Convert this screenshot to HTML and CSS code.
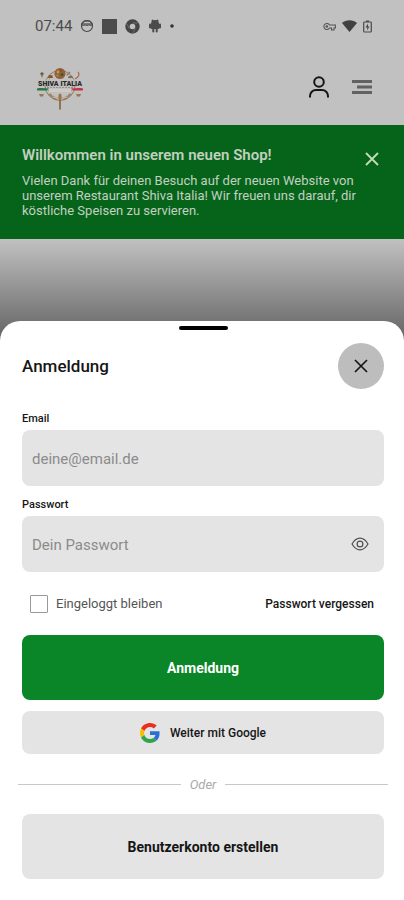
FILE: index.html
```html
<!DOCTYPE html>
<html lang="de">
<head>
<meta charset="utf-8">
<meta name="viewport" content="width=device-width, initial-scale=1">
<title>Shiva Italia – Anmeldung</title>
<link rel="stylesheet" href="styles.css">
</head>
<body>
<div class="status">
  <div class="status-group">
    <span class="time">07:44</span>
    <svg width="14" height="14" viewBox="0 0 14 14" fill="none" stroke="#4b4b4b"><circle cx="7" cy="7" r="5.500" stroke-width="1.200"/><path d="M1.500 5.500C3 7.500 5 5 7 6.500c2-1.500 4 1 5.500-1C12 2.500 9.500 1.500 7 1.500S2 2.500 1.500 5.500z" fill="#4b4b4b" fill-opacity=".6"/><path d="M4 3.500h6" stroke="#c1c1c1"/></svg>
    <svg width="15" height="15" viewBox="0 0 15 15"><path fill="#4b4b4b" d="M0 0h15v15H0z"/></svg>
    <svg width="15" height="15" viewBox="0 0 15 15"><circle cx="7.500" cy="7.500" r="5" fill="none" stroke="#454545" stroke-width="4.400"/><path d="M6.200 5.200l3.600 2.300-3.600 2.300z" fill="#c1c1c1"/><path d="M7.500 4H13M10.500 9.500l-3 5M4.500 9.500L1.500 4.500" stroke="#8a8a8a" stroke-width=".6"/></svg>
    <svg width="14" height="14" viewBox="0 0 14 14" fill="#4b4b4b"><path d="M3 5a4 4 0 0 1 8 0v5H3z"/><path d="M4.500 1.500l1 1.500M9.500 1.500L8.500 3M2 5.500v3M12 5.500v3M5.300 9v3.500M8.700 9v3.500" stroke="#4b4b4b" stroke-width="2" stroke-linecap="round"/></svg>
    <svg width="4" height="4" viewBox="0 0 4 4"><circle cx="2" cy="2" r="1.800" fill="#333"/></svg>
  </div>
  <div class="status-group status-right">
    <svg width="13" height="9" viewBox="0 0 13 9" fill="none" stroke="#555" stroke-width="1.100"><path d="M6.500 3A3 3 0 1 0 6.500 6H8.500V8H11V6H12.400V3z"/><circle cx="3.800" cy="4.500" r=".8"/></svg>
    <svg width="15" height="12" viewBox="0 0 15 12"><path d="M0 3C4-.8 11-.8 15 3L7.500 12z" fill="#414141"/></svg>
    <svg width="9" height="13" viewBox="0 0 9 13"><path d="M3 1h3M1.500 2h6a.8.800 0 0 1 .8.800v8.400a.8.800 0 0 1-.8.800h-6a.8.800 0 0 1-.8-.8V2.800A.8.800 0 0 1 1.500 2z" fill="none" stroke="#4b4b4b" stroke-width="1.200"/><path d="M5 3.500L2.500 7.500H4.200V10.500L6.500 6.500H5z" fill="#4b4b4b"/></svg>
  </div>
</div>

<header class="header">
  <a href="#" class="logo" aria-label="Shiva Italia">
    <svg width="50" height="44" viewBox="0 0 50 44">
      <circle cx="25" cy="18.500" r="15" fill="none" stroke="#8f7a62" stroke-width="1"/>
      <circle cx="25" cy="18.500" r="12.500" fill="none" stroke="#a3937c" stroke-width=".7" stroke-dasharray="3 1"/>
      <circle cx="25" cy="6.500" r="5.500" fill="#8f6237"/>
      <circle cx="23" cy="5" r="1.400" fill="#c79a48"/><circle cx="27" cy="7.500" r="1.500" fill="#48542b"/><circle cx="26" cy="3.500" r="1" fill="#a33b28"/><circle cx="22.500" cy="8.500" r="1" fill="#ba8f55"/>
      <path d="M5 6h4l-2 5z" fill="#927247"/><circle cx="7" cy="6.500" r="1.300" fill="#5d6341"/>
      <path d="M13 11c0-4 5-4 5 0z" fill="#89521f"/><path d="M33 11c0-3 5-3 5 0z" fill="#786d5e"/>
      <path d="M43 5c2 2 1 5-3 7M32 8l3-3" fill="none" stroke="#a76659" stroke-width="1.200"/>
      <path d="M2 12.500h46v6H2z" fill="#c1c1c1" fill-opacity=".65"/>
      <text class="logo-text" x="25" y="18.500" text-anchor="middle">SHIVA ITALIA</text>
      <path d="M12 20.500h26" stroke="#8a8580" stroke-width=".8" stroke-dasharray="2 1"/>
      <path d="M14 22h22v3H14z" fill="#cecbc7"/>
      <path d="M2 21.500c5-1 8 0 12 0l-2 2H2z" fill="#29774b"/>
      <path d="M36 21.500c4 0 8-1 12 0v2H38z" fill="#c7324a"/>
      <path d="M4 27h5l-1 2.500H5zM41 27h5l-1 2.500h-3z" fill="#987753"/>
      <path d="M14 27l4 3M36 27l-4 3M18 31l4 1.500M32 31l-4 1.500" stroke="#9b7548" stroke-width="1.300"/>
      <path d="M25 27v15.500" stroke="#7c5930" stroke-width="1.500"/><ellipse cx="25" cy="30" rx="1.600" ry="3.500" fill="#9c7646"/>
    </svg>
  </a>
  <nav class="header-actions">
    <button class="icon-btn" aria-label="Konto"><svg width="22" height="24" viewBox="0 0 22 24" fill="none" stroke="#151515" stroke-width="2"><circle cx="11" cy="7" r="4.800"/><path d="M2 22.500v-1.500a6 6 0 0 1 6-6h6a6 6 0 0 1 6 6v1.500"/></svg></button>
    <button class="icon-btn" aria-label="Menü"><svg width="20" height="16" viewBox="0 0 20 16" stroke="#626262" stroke-width="2.800"><path d="M0 2.500h20M5 8h15M0 13.500h20"/></svg></button>
  </nav>
</header>

<section class="banner">
  <div class="banner-copy">
    <h2>Willkommen in unserem neuen Shop!</h2>
    <p>Vielen Dank für deinen Besuch auf der neuen Website von unserem Restaurant Shiva Italia! Wir freuen uns darauf, dir köstliche Speisen zu servieren.</p>
  </div>
  <button class="icon-btn" aria-label="Hinweis schließen"><svg width="14" height="14" viewBox="0 0 14 14" stroke="#c6dab8" stroke-width="1.800"><path d="M1 1l12 12M13 1L1 13"/></svg></button>
</section>

<div class="hero"></div>

<main class="sheet">
  <div class="handle"></div>
  <div class="sheet-head">
    <h1>Anmeldung</h1>
    <button class="close" aria-label="Schließen"><svg width="14" height="14" viewBox="0 0 14 14" stroke="#161616" stroke-width="1.700"><path d="M1 1l12 12M13 1L1 13"/></svg></button>
  </div>
  <form class="form">
    <label class="label" for="email">Email</label>
    <div class="field"><input id="email" type="email" placeholder="deine@email.de"></div>
    <label class="label" for="password">Passwort</label>
    <div class="field">
      <input id="password" type="password" placeholder="Dein Passwort">
      <button type="button" class="icon-btn" aria-label="Passwort anzeigen"><svg width="18" height="14" viewBox="0 0 18 14" fill="none" stroke="#4d4d4d" stroke-width="1.200"><path d="M1 7C3.500 2.800 6 1.200 9 1.200S14.500 2.800 17 7c-2.500 4.200-5 5.800-8 5.800S3.500 11.200 1 7z"/><circle cx="9" cy="7" r="2.900"/></svg></button>
    </div>
    <div class="options">
      <label class="remember"><input type="checkbox">Eingeloggt bleiben</label>
      <a href="#">Passwort vergessen</a>
    </div>
    <button type="submit" class="btn btn-primary">Anmeldung</button>
    <button type="button" class="btn btn-google"><svg width="20" height="20" viewBox="0 0 48 48"><path fill="#EA2E20" d="M24 9.500c3.540 0 6.710 1.220 9.210 3.600l6.850-6.850C35.900 2.380 30.470 0 24 0 14.620 0 6.510 5.380 2.560 13.220l7.980 6.190C12.430 13.720 17.740 9.500 24 9.500z"/><path fill="#286fd7" d="M46.980 24.550c0-1.570-.15-3.090-.38-4.550H24v9.020h12.940c-.58 2.960-2.260 5.480-4.780 7.180l7.730 6c4.510-4.180 7.090-10.360 7.090-17.650z"/><path fill="#FBBC05" d="M10.530 28.590c-.48-1.450-.76-2.990-.76-4.590s.27-3.140.76-4.590l-7.980-6.190C.92 16.460 0 20.120 0 24s.92 7.540 2.560 10.780z"/><path fill="#30a34f" d="M24 48c6.480 0 11.930-2.130 15.890-5.810l-7.730-6c-2.150 1.450-4.920 2.300-8.160 2.300-6.260 0-11.570-4.220-13.470-9.910l-7.980 6.190C6.510 42.620 14.620 48 24 48z"/></svg>Weiter mit Google</button>
    <div class="divider">Oder</div>
    <button type="button" class="btn btn-secondary">Benutzerkonto erstellen</button>
  </form>
</main>
</body>
</html>
```
FILE: styles.css
```css
* { box-sizing: border-box; }

body {
  margin: 0;
  min-height: 100vh;
  display: flex;
  flex-direction: column;
  background: #c1c1c1;
  color: #161616;
  font-family: Roboto, "Liberation Sans", sans-serif;
}

h1, h2, p { margin: 0; }
svg { display: block; flex: none; }
button, input { font: inherit; color: inherit; }
button { border: 0; padding: 0; cursor: pointer; }
a { color: inherit; text-decoration: none; }
.icon-btn { background: none; }

.status {
  display: flex;
  align-items: center;
  justify-content: space-between;
  height: 52px;
  padding: 0 32px 0 35px;
}
.status-group { display: flex; align-items: center; gap: 8px; }
.status-right { gap: 6px; }
.time { font-size: 15px; color: #4b4b4b; }

.header {
  display: flex;
  align-items: flex-start;
  justify-content: space-between;
  height: 73px;
  padding: 15px 32px 0 35px;
}
.logo-text { font-size: 7px; font-weight: 900; fill: #292725; }
.header-actions { display: flex; align-items: center; gap: 22px; padding-top: 8px; }

.banner {
  display: flex;
  align-items: flex-start;
  gap: 4px;
  height: 114px;
  padding: 20px 25px 0 22px;
  background: #06641a;
  color: #c2d0c0;
}
.banner-copy { flex: 1; }
.banner h2 { font-size: 15px; line-height: 20px; font-weight: 600; }
.banner p { margin-top: 8px; font-size: 13px; line-height: 15px; font-weight: 400; }
.banner .icon-btn { margin-top: 7px; }

.hero { height: 102px; background: linear-gradient(#c1c1c1, #626262); }

.sheet {
  flex: 1;
  margin-top: -20px;
  padding: 5px 20px 21px 22px;
  border-radius: 20px 20px 0 0;
  background: #fff;
}
.handle { width: 49px; height: 4px; margin: 0 auto; border-radius: 2px; background: #000; }
.sheet-head {
  display: flex;
  align-items: center;
  justify-content: space-between;
  margin-top: 13px;
}
.sheet-head h1 { font-size: 17px; font-weight: 500; }
.close {
  display: grid;
  place-items: center;
  width: 46px;
  height: 46px;
  border-radius: 50%;
  background: #bdbdbd;
}

.form { display: flex; flex-direction: column; margin-top: 22px; }
.label { height: 19px; font-size: 11px; line-height: 16px; font-weight: 500; }
.field {
  display: flex;
  align-items: center;
  height: 56px;
  margin-bottom: 11px;
  padding: 0 15px 0 10px;
  border-radius: 8px;
  background: #e4e4e4;
}
.field input { flex: 1; min-width: 0; padding: 2px 0 0; border: 0; background: none; font-size: 15px; outline: 0; }
.field input::placeholder { color: #8b8b8b; opacity: 1; }

.options {
  display: flex;
  align-items: center;
  justify-content: space-between;
  height: 41px;
  margin-bottom: 11px;
  padding: 0 10px 0 8px;
  font-size: 12px;
  font-weight: 500;
}
.remember { display: flex; align-items: center; gap: 8px; font-size: 13px; font-weight: 400; color: #555; }
.remember input { appearance: none; width: 18px; height: 18px; margin: 0; border: 1px solid #999; border-radius: 1px; background: #fff; }

.btn {
  display: flex;
  align-items: center;
  justify-content: center;
  height: 65px;
  border-radius: 8px;
  background: #e4e4e4;
  font-size: 14px;
  font-weight: 500;
}
.btn-primary { background: #0a8527; color: #fff; font-weight: 700; }
.btn-secondary { font-weight: 700; }
.btn-google { gap: 10px; height: 43px; margin-top: 11px; font-size: 12px; }

.divider {
  display: flex;
  align-items: center;
  gap: 9px;
  height: 60px;
  margin: 0 -4px;
  font-size: 13px;
  font-style: italic;
  color: #aaa;
}
.divider::before, .divider::after { content: ""; flex: 1; height: 1px; background: #c8c8c8; }
```
